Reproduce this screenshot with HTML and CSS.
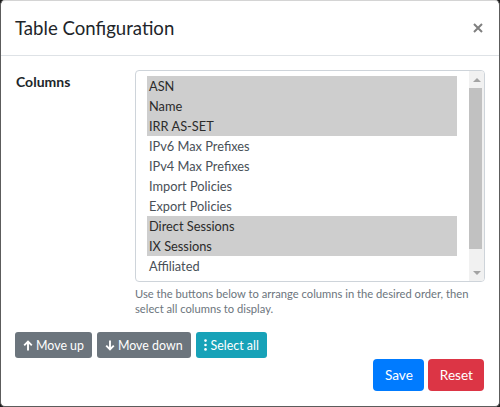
FILE: index.html
```html
<!DOCTYPE html>
<html>
<head>
<meta charset="utf-8">
<title>Table Configuration</title>
<link rel="stylesheet" href="styles.css">
</head>
<body>
<div class="modal">
  <div class="modal-header">
    <h5 class="modal-title">Table Configuration</h5>
    <button class="close" type="button" aria-label="Close">
      <svg class="close-icon" viewBox="0 0 10 10" width="10" height="10"><path d="M1 1L9 9M9 1L1 9" stroke="#7f7f7f" stroke-width="2" fill="none"/></svg>
    </button>
  </div>
  <div class="modal-body">
    <div class="form-row">
      <label class="col-label">Columns</label>
      <div class="col-field">
        <div class="listbox">
          <div class="options">
            <div class="opt sel">ASN</div>
            <div class="opt sel">Name</div>
            <div class="opt sel">IRR AS-SET</div>
            <div class="opt">IPv6 Max Prefixes</div>
            <div class="opt">IPv4 Max Prefixes</div>
            <div class="opt">Import Policies</div>
            <div class="opt">Export Policies</div>
            <div class="opt sel">Direct Sessions</div>
            <div class="opt sel">IX Sessions</div>
            <div class="opt">Affiliated</div>
          </div>
          <div class="scrollbar">
            <div class="sb-arrow"><span class="tri-up"></span></div>
            <div class="sb-thumb"></div>
            <div class="sb-track"></div>
            <div class="sb-arrow"><span class="tri-down"></span></div>
          </div>
        </div>
        <small class="help">Use the buttons below to arrange columns in the desired order, then select all columns to display.</small>
      </div>
    </div>
    <div class="btn-row">
      <button class="btn btn-sm btn-secondary" type="button">
        <svg class="ico" viewBox="0 0 10 11" width="10" height="11"><path d="M5 10.5V1.6M1.2 5.4L5 1.6L8.8 5.4" stroke="#fff" stroke-width="1.9" fill="none"/></svg>
        <span>Move up</span>
      </button>
      <button class="btn btn-sm btn-secondary" type="button">
        <svg class="ico" viewBox="0 0 10 11" width="10" height="11"><path d="M5 0.5V9.4M1.2 5.6L5 9.4L8.8 5.6" stroke="#fff" stroke-width="1.9" fill="none"/></svg>
        <span>Move down</span>
      </button>
      <button class="btn btn-sm btn-info" type="button">
        <svg class="ico ico-dots" viewBox="0 0 3 12" width="3" height="12"><circle cx="1.5" cy="1.6" r="1.3" fill="#fff"/><circle cx="1.5" cy="6" r="1.3" fill="#fff"/><circle cx="1.5" cy="10.4" r="1.3" fill="#fff"/></svg>
        <span>Select all</span>
      </button>
    </div>
    <div class="footer-row">
      <button class="btn btn-primary" type="button">Save</button>
      <button class="btn btn-danger" type="button">Reset</button>
    </div>
  </div>
</div>
</body>
</html>
```

FILE: styles.css
```css
* { box-sizing: border-box; }
html, body { margin: 0; padding: 0; }
body {
  width: 500px;
  height: 407px;
  overflow: hidden;
  background: #1c1c1c;
  font-family: Lato, "Open Sans", sans-serif;
  color: #212529;
}
.modal {
  width: 500px;
  height: 407px;
  background: #fff;
  border: 1px solid #5c5c5c;
  border-top-color: #d4d4d4;
  border-radius: 5px;
  display: flex;
  flex-direction: column;
}
.modal-header {
  height: 55px;
  display: flex;
  align-items: center;
  justify-content: space-between;
  padding: 0 15px 0 14px;
  border-bottom: 1px solid #dee2e6;
}
.modal-title {
  margin: 0;
  font-size: 18.6px;
  line-height: 24px;
  font-weight: 400;
  color: #212529;
}
.close {
  border: 0;
  background: none;
  padding: 0;
  margin: 0 1px 0 0;
  display: flex;
}
.modal-body {
  padding: 14px 15px 15px 14px;
}
.form-row {
  display: grid;
  grid-template-columns: 120px 350px;
}
.col-label {
  font-weight: 700;
  font-size: 14px;
  line-height: 20px;
  padding-top: 2px;
  padding-left: 1px;
  color: #212529;
}
.listbox {
  height: 212px;
  border: 1px solid #ced4da;
  border-radius: 4px;
  display: flex;
  overflow: hidden;
}
.options {
  flex: 1;
  padding: 5px 12px 0 11px;
}
.opt {
  height: 20px;
  line-height: 20px;
  font-size: 12.8px;
  color: #495057;
  padding-left: 2px;
  white-space: nowrap;
}
.opt.sel { background: #cecece; color: #2b2b2b; }
.scrollbar {
  width: 15px;
  display: flex;
  flex-direction: column;
  background: #f1f1f1;
}
.sb-arrow {
  height: 17px;
  display: flex;
  align-items: center;
  justify-content: center;
}
.tri-up, .tri-down {
  width: 0;
  height: 0;
  border-left: 4px solid transparent;
  border-right: 4px solid transparent;
}
.tri-up { border-bottom: 4px solid #a3a3a3; }
.tri-down { border-top: 4px solid #a3a3a3; }
.sb-thumb {
  height: 161px;
  width: 13px;
  background: #c1c1c1;
}
.sb-track { flex: 1; }
.help {
  display: block;
  margin-top: 4px;
  font-size: 11.2px;
  line-height: 15px;
  color: #6c757d;
}
.btn-row {
  display: flex;
  gap: 5px;
  margin-top: 16px;
}
.footer-row {
  display: flex;
  justify-content: flex-end;
  gap: 4px;
  margin-top: 1px;
}
.btn {
  border: 0;
  color: #fff;
  font-family: inherit;
  display: inline-flex;
  align-items: center;
  cursor: pointer;
}
.btn-sm {
  height: 26px;
  padding: 0 8px;
  font-size: 12.4px;
  border-radius: 3px;
  gap: 3px;
}
.btn-sm .ico-dots { margin-right: 1px; }
.footer-row .btn {
  height: 32px;
  padding: 0 11px 0 12px;
  font-size: 13.6px;
  border-radius: 4px;
}
.btn-secondary { background: #6c757d; }
.btn-info { background: #17a2b8; }
.btn-primary { background: #007bff; }
.btn-danger { background: #dc3545; }
```
